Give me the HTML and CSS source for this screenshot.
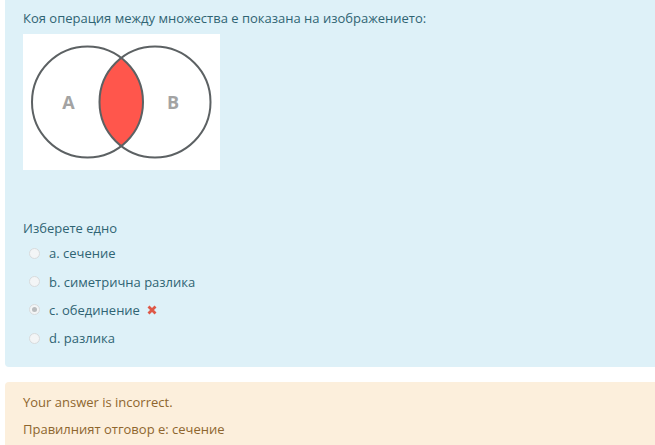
FILE: index.html
```html
<!DOCTYPE html>
<html>
<head>
<meta charset="utf-8">
<link rel="stylesheet" href="styles.css">
</head>
<body>
<div class="page">
  <div class="formulation">
    <div class="qtext">Коя операция между множества е показана на изображението:</div>
    <div class="venn">
      <svg width="197" height="136" viewBox="0 0 197 136">
        <rect width="197" height="136" fill="#fff"/>
        <path d="M98.25 24 A55.5 55.5 0 0 1 98.25 112 A55.5 55.5 0 0 1 98.25 24 Z" fill="#ff564c"/>
        <circle cx="64.5" cy="68" r="55.5" fill="none" stroke="#5c6163" stroke-width="2"/>
        <circle cx="132" cy="68" r="55.5" fill="none" stroke="#5c6163" stroke-width="2"/>
        <text x="45.5" y="74.5" text-anchor="middle" class="vlabel">A</text>
        <text x="150" y="74.5" text-anchor="middle" class="vlabel">B</text>
      </svg>
    </div>
    <div class="prompt">Изберете едно</div>
    <div class="answers">
      <div class="opt"><span class="radio"></span><span>a. сечение</span></div>
      <div class="opt"><span class="radio"></span><span>b. симетрична разлика</span></div>
      <div class="opt"><span class="radio checked"></span><span>c. обединение</span>
        <svg class="wrong" width="10" height="10" viewBox="0 0 10 10"><path d="M1.5 1.5 L8.5 8.5 M8.5 1.5 L1.5 8.5" stroke="#de5847" stroke-width="2.8" stroke-linecap="butt"/></svg>
      </div>
      <div class="opt"><span class="radio"></span><span>d. разлика</span></div>
    </div>
  </div>
  <div class="feedback">
    <div class="fb-line">Your answer is incorrect.</div>
    <div class="fb-line second">Правилният отговор е: сечение</div>
  </div>
</div>
</body>
</html>
```
FILE: styles.css
```css
html, body {
  margin: 0;
  padding: 0;
  background: #fff;
  overflow: hidden;
}
body {
  font-family: "Open Sans", "Liberation Sans", sans-serif;
  font-size: 13px;
  line-height: 20px;
}
.page {
  padding-left: 5px;
}
.formulation {
  background: #def1f8;
  color: #2f6473;
  padding: 8px 0 14px 18px;
  border-radius: 0 0 0 4px;
}
.venn {
  margin-top: 6px;
  width: 197px;
  height: 136px;
}
.venn svg { display: block; }
.vlabel {
  font-family: "Open Sans", "Liberation Sans", sans-serif;
  font-weight: 700;
  font-size: 18px;
  fill: #a3a3a3;
}
.prompt {
  margin-top: 48px;
}
.answers {
  margin-top: 1px;
}
.opt {
  display: flex;
  align-items: center;
  height: 28.4px;
  padding-left: 6px;
}
.radio {
  width: 11px;
  height: 11px;
  box-sizing: border-box;
  border-radius: 50%;
  border: 1px solid #d8dbdd;
  background: #f3f5f6;
  margin-right: 9px;
  display: flex;
  align-items: center;
  justify-content: center;
}
.radio.checked::after {
  content: "";
  width: 5px;
  height: 5px;
  border-radius: 50%;
  background: #b9bcbe;
}
.wrong {
  margin-left: 7px;
  margin-top: 1px;
}
.feedback {
  margin-top: 15px;
  background: #fcefdc;
  color: #8e662e;
  padding: 10px 0 12px 18px;
  border-radius: 4px 0 0 0;
}
.fb-line.second {
  margin-top: 7px;
}
```
